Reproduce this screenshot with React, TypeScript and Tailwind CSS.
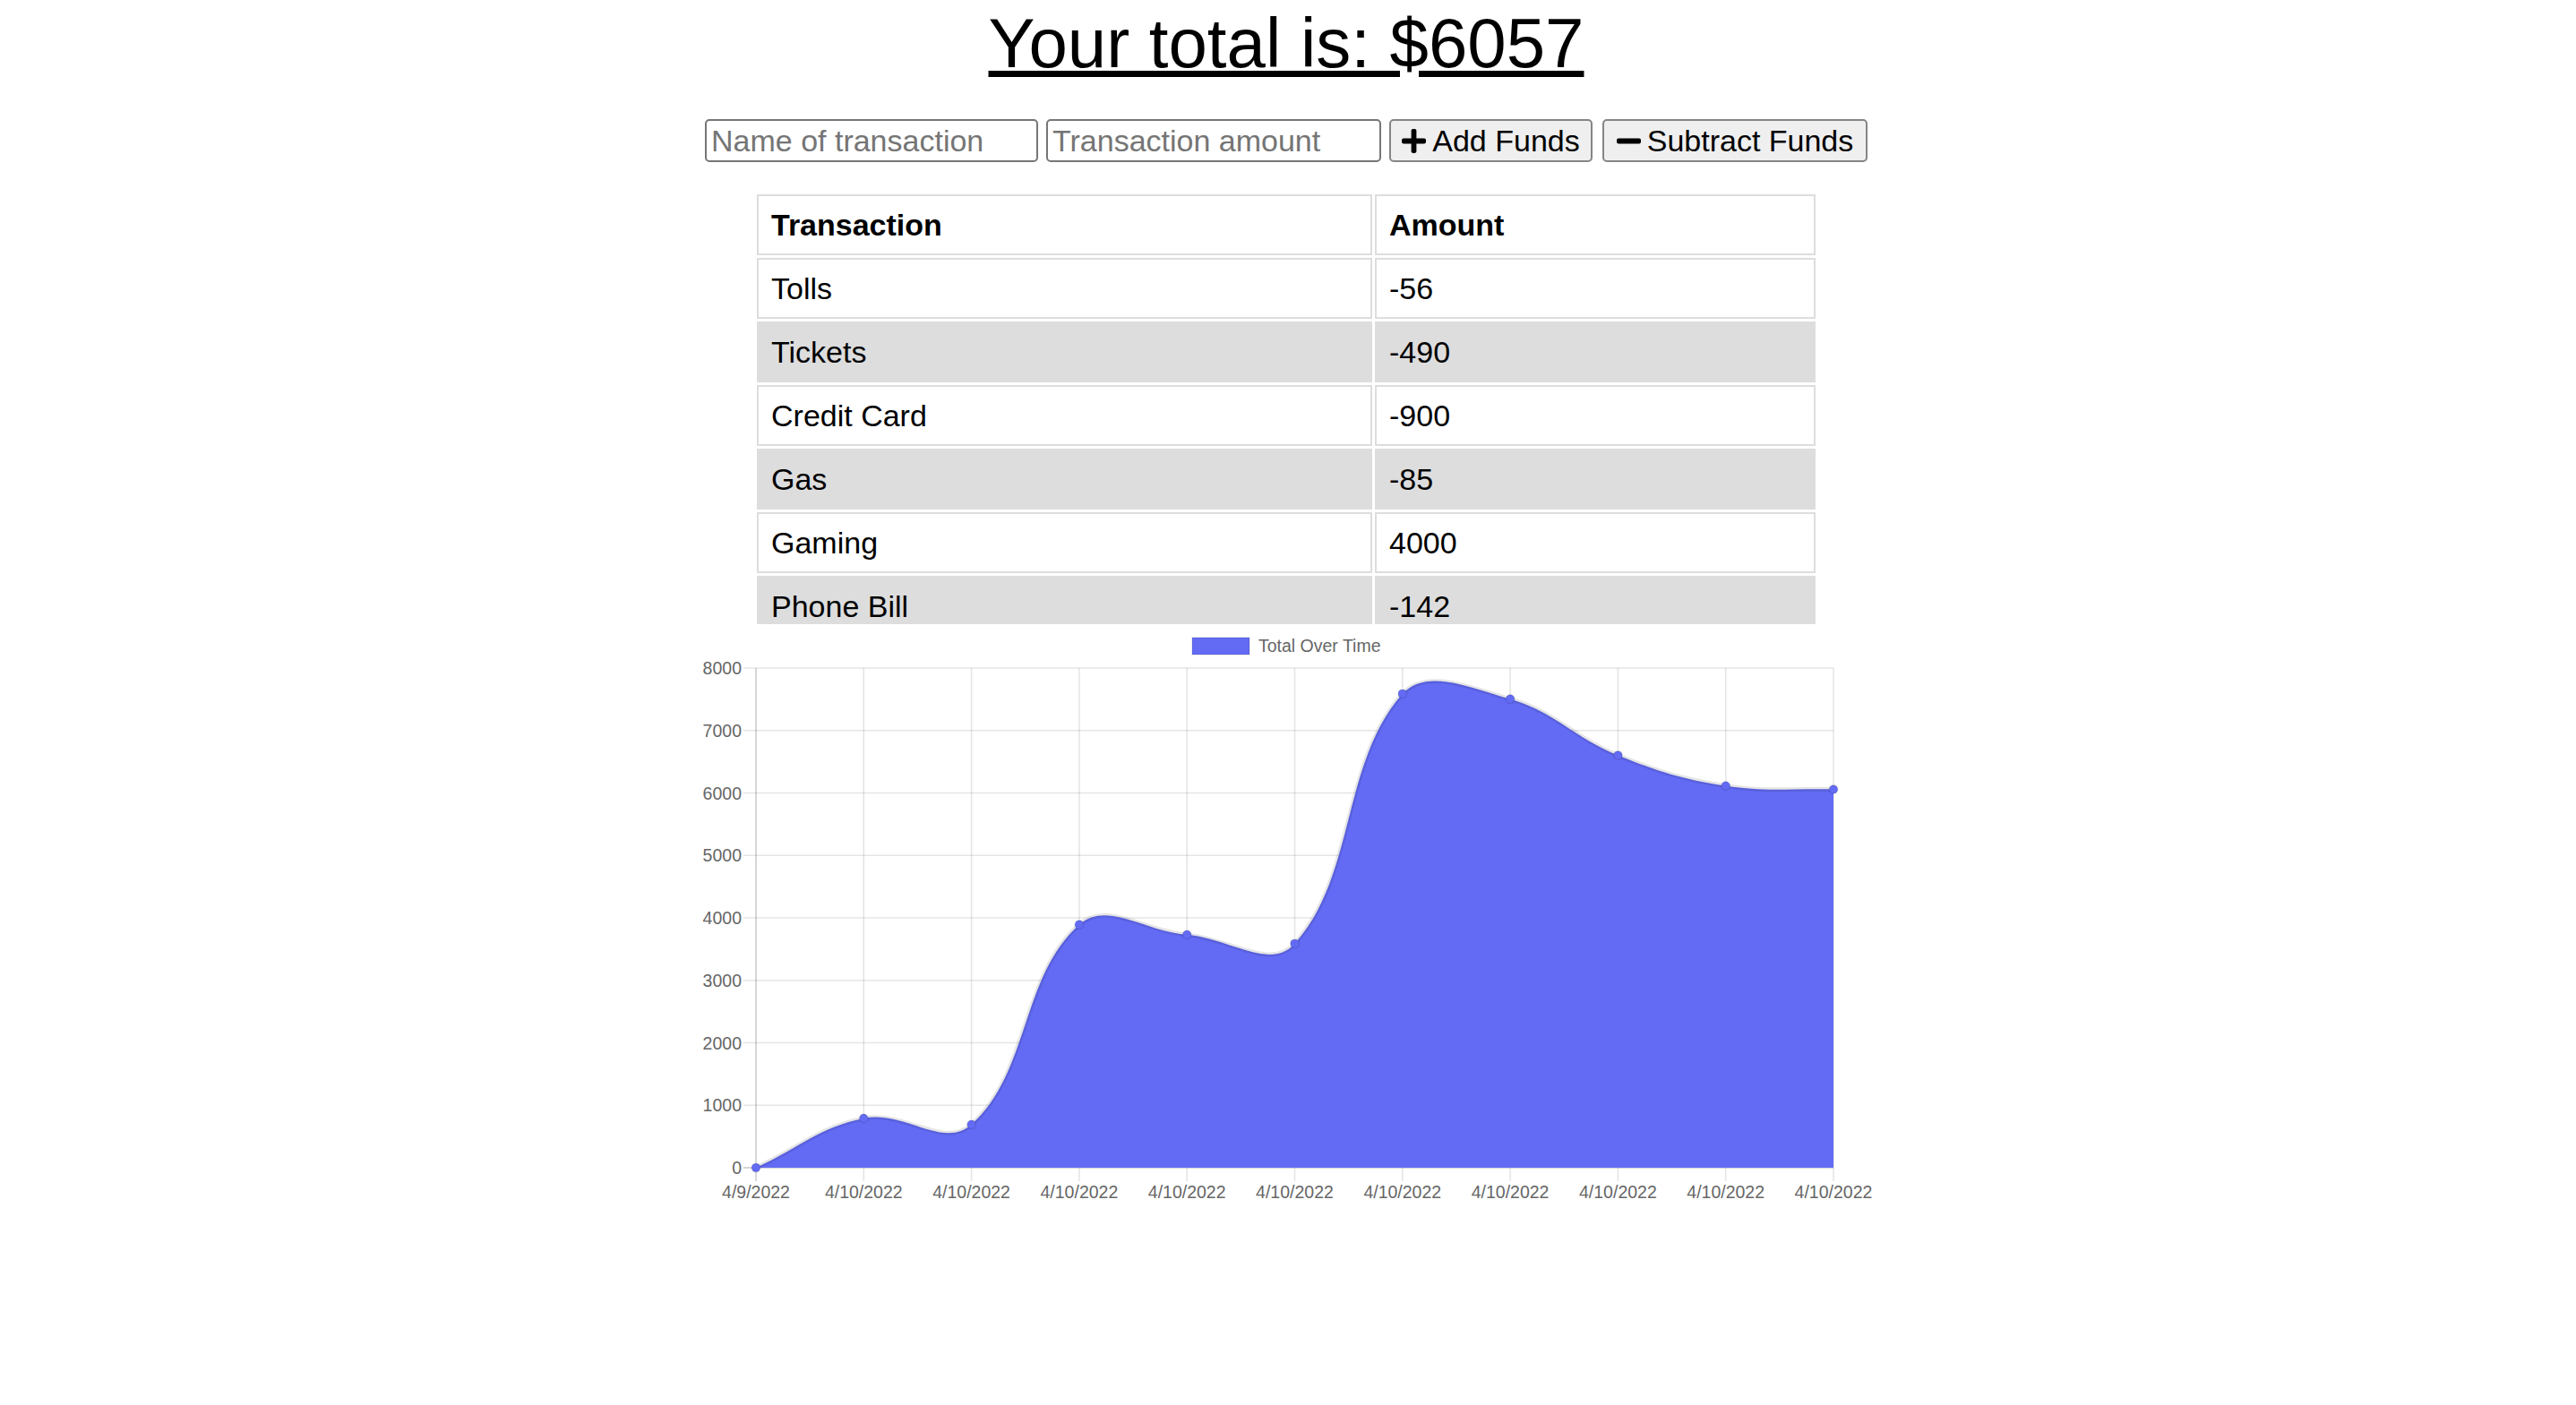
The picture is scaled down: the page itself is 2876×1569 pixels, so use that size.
import React from "react";
import { FaPlus, FaMinus } from "react-icons/fa";

interface Row {
  name: string;
  value: number;
}

const rows: Row[] = [
  { name: "Tolls", value: -56 },
  { name: "Tickets", value: -490 },
  { name: "Credit Card", value: -900 },
  { name: "Gas", value: -85 },
  { name: "Gaming", value: 4000 },
  { name: "Phone Bill", value: -142 },
];

const totals = [0, 790, 690, 3890, 3730, 3588, 7588, 7503, 6603, 6113, 6057];
const labels = ["4/9/2022", ...Array(10).fill("4/10/2022")];

// chart geometry, in page pixels (the svg viewBox starts at the page offset)
const LEFT = 844;
const RIGHT = 2047;
const TOP = 746;
const BOTTOM = 1304;
const MAX = 8000;
const STEP = (RIGHT - LEFT) / (totals.length - 1);
const FILL = "#636bf5";

type Pt = { x: number; y: number };

const clamp = (v: number, lo: number, hi: number) => Math.min(hi, Math.max(lo, v));

// same spline as chart.js v2 (tension 0.4, capped to the chart area)
function buildPath(points: Pt[], tension = 0.4) {
  const ctrl = points.map((cur, i) => {
    const prev = points[i - 1] ?? cur;
    const next = points[i + 1] ?? cur;
    const d01 = Math.hypot(cur.x - prev.x, cur.y - prev.y);
    const d12 = Math.hypot(next.x - cur.x, next.y - cur.y);
    const s01 = d01 + d12 ? d01 / (d01 + d12) : 0;
    const s12 = d01 + d12 ? d12 / (d01 + d12) : 0;
    const fa = tension * s01;
    const fb = tension * s12;
    return {
      prev: {
        x: clamp(cur.x - fa * (next.x - prev.x), LEFT, RIGHT),
        y: clamp(cur.y - fa * (next.y - prev.y), TOP, BOTTOM),
      },
      next: {
        x: clamp(cur.x + fb * (next.x - prev.x), LEFT, RIGHT),
        y: clamp(cur.y + fb * (next.y - prev.y), TOP, BOTTOM),
      },
    };
  });
  let d = `M${points[0].x},${points[0].y}`;
  for (let i = 1; i < points.length; i++) {
    const a = ctrl[i - 1].next;
    const b = ctrl[i].prev;
    d += ` C${a.x},${a.y} ${b.x},${b.y} ${points[i].x},${points[i].y}`;
  }
  return d;
}

const TotalChart = () => {
  const points = totals.map((v, i) => ({
    x: LEFT + i * STEP,
    y: BOTTOM - (v / MAX) * (BOTTOM - TOP),
  }));
  const line = buildPath(points);
  const area = `${line} L${RIGHT},${BOTTOM} L${LEFT},${BOTTOM} Z`;
  const yTicks = [0, 1000, 2000, 3000, 4000, 5000, 6000, 7000, 8000];

  return (
    <svg
      width={1400}
      height={680}
      viewBox="738 697 1400 680"
      className="block mx-auto fill-[#666]"
    >
      {/* legend */}
      <rect x={1331} y={712} width={64} height={19} fill={FILL} stroke="rgba(0,0,0,0.1)" strokeWidth={1.6} />
      <text x={1405} y={728} fontSize={19.5}>
        Total Over Time
      </text>

      {/* grid */}
      {yTicks.map((t) => {
        const y = BOTTOM - (t / MAX) * (BOTTOM - TOP);
        return (
          <g key={t}>
            <line
              x1={830}
              x2={RIGHT}
              y1={y}
              y2={y}
              stroke={t === 0 ? "rgba(0,0,0,0.22)" : "rgba(0,0,0,0.1)"}
              strokeWidth={1.6}
            />
            <text x={828} y={y + 7} fontSize={19.5} textAnchor="end">
              {t}
            </text>
          </g>
        );
      })}
      {points.map((p, i) => (
        <g key={i}>
          <line
            x1={p.x}
            x2={p.x}
            y1={TOP}
            y2={BOTTOM + 15}
            stroke={i === 0 ? "rgba(0,0,0,0.2)" : "rgba(0,0,0,0.1)"}
            strokeWidth={1.6}
          />
          <text x={p.x} y={1338} fontSize={19.5} textAnchor="middle">
            {labels[i]}
          </text>
        </g>
      ))}

      {/* series */}
      <path d={area} fill={FILL} />
      <path d={line} fill="none" stroke="rgba(0,0,0,0.1)" strokeWidth={4.8} />
      {points.map((p, i) => (
        <circle key={i} cx={p.x} cy={p.y} r={4.8} fill={FILL} stroke="rgba(0,0,0,0.1)" strokeWidth={1.6} />
      ))}
    </svg>
  );
};

const App = () => {
  return (
    <div className="min-h-screen bg-white text-black font-['Liberation_Sans',Arial,sans-serif]">
      <h1 className="mt-[4px] pr-[4px] text-center text-[78px] leading-[88px] font-normal underline">
        Your total is: $6057
      </h1>

      <div className="mt-[41px] flex justify-center pr-[4px]">
        <input
          type="text"
          placeholder="Name of transaction"
          className="box-border h-[48px] w-[372px] rounded-[5px] border-2 border-[#767676] bg-white px-[5px] text-[34px] outline-none placeholder:text-[#757575]"
        />
        <input
          type="number"
          placeholder="Transaction amount"
          className="ml-[9px] box-border h-[48px] w-[374px] rounded-[5px] border-2 border-[#767676] bg-white px-[5px] text-[34px] outline-none placeholder:text-[#757575]"
        />
        <button className="ml-[9px] box-border flex h-[48px] w-[227px] items-center justify-center gap-[7px] rounded-[5px] border-2 border-[#858585] bg-[#efefef] text-[34px]">
          <FaPlus className="h-[31px] w-[27px]" />
          Add Funds
        </button>
        <button className="ml-[11px] box-border flex h-[48px] w-[296px] items-center justify-center gap-[7px] rounded-[5px] border-2 border-[#858585] bg-[#efefef] text-[34px]">
          <FaMinus className="h-[31px] w-[27px]" />
          Subtract Funds
        </button>
      </div>

      <div className="mt-[33px] flex justify-center pr-[4px]">
        <div className="h-[483px] w-[1188px] overflow-hidden">
          <table className="w-[1188px] border-separate border-spacing-[3px] text-[34px]">
            <thead>
              <tr>
                <th className="box-border h-[68px] w-[687px] border-2 border-[#dddddd] bg-white px-[14px] text-left font-bold">
                  Transaction
                </th>
                <th className="box-border h-[68px] border-2 border-[#dddddd] bg-white px-[14px] text-left font-bold">
                  Amount
                </th>
              </tr>
            </thead>
            <tbody>
              {rows.map((row, i) => (
                <tr key={row.name} className={i % 2 === 1 ? "bg-[#dddddd]" : "bg-white"}>
                  <td className="box-border h-[68px] border-2 border-[#dddddd] px-[14px]">{row.name}</td>
                  <td className="box-border h-[68px] border-2 border-[#dddddd] px-[14px]">{row.value}</td>
                </tr>
              ))}
            </tbody>
          </table>
        </div>
      </div>

      <TotalChart />
    </div>
  );
};

export default App;
